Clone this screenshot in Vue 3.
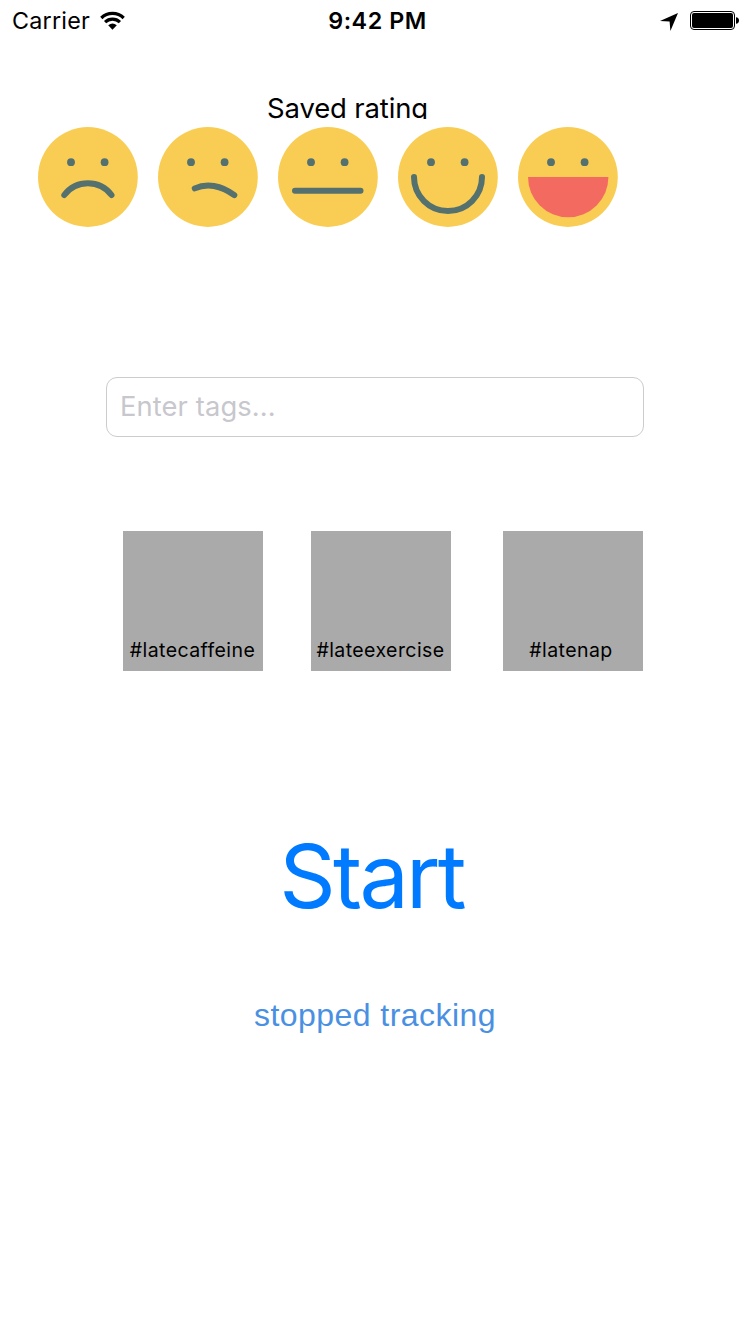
<script setup>
const faces = [
  { name: 'awful', mouth: 'M26.300 68A29.600 29.600 0 0 1 73.500 68' },
  { name: 'bad', mouth: 'M36.800 61.400C48.500 56 63 58 76.300 68.200' },
  { name: 'okay', mouth: 'M17 63.700H82.500' },
  { name: 'good', mouth: 'M16 50A34 34 0 0 0 84 50' },
  { name: 'great', mouth: null },
]
const tags = ['#latecaffeine', '#lateexercise', '#latenap']
</script>

<template>
  <main class="screen">
    <header class="status">
      <div class="side">
        <span class="carrier">Carrier</span>
        <svg class="wifi" width="25" height="19" viewBox="0 0 25 19">
          <g fill="none" stroke="#000" stroke-width="3.200">
            <path d="M1.300 7A16 16 0 0 1 23.700 7" />
            <path d="M5.100 11.200A10.600 10.600 0 0 1 19.900 11.200" />
          </g>
          <path d="M12.500 18.700L8.200 14.300Q12.500 10.800 16.800 14.300Z" />
        </svg>
      </div>
      <span class="clock">9:42 PM</span>
      <div class="side right">
        <svg class="arrow" width="18" height="18" viewBox="0 0 18 18">
          <path d="M18 0L10.400 18L9.600 8.600L0 7.900Z" />
        </svg>
        <svg class="battery" width="50" height="19" viewBox="0 0 50 19">
          <rect x=".5" y=".5" width="44" height="18" rx="3.500" fill="#fff" stroke="#000" />
          <rect x="2" y="2" width="41" height="15" rx="2" />
          <path d="M46 6.300Q49 6.500 49 9.500T46 12.700Z" />
        </svg>
      </div>
    </header>

    <div class="saved"><span>Saved rating</span></div>

    <div class="faces">
      <svg v-for="f in faces" :key="f.name" width="100" height="100" viewBox="0 0 100 100">
        <circle cx="49.900" cy="50" r="49.900" fill="#f9cd54" />
        <circle cx="33" cy="35.200" r="3.900" fill="#54706f" />
        <circle cx="66.600" cy="35.200" r="3.900" fill="#54706f" />
        <path v-if="f.mouth" :d="f.mouth" fill="none" stroke="#54706f" stroke-width="6" stroke-linecap="round" />
        <path v-else d="M10 50H90.400A40.200 40.200 0 0 1 10 50Z" fill="#f36b60" />
      </svg>
    </div>

    <input class="entry" type="text" placeholder="Enter tags..." />

    <div class="tags">
      <div v-for="t in tags" :key="t" class="tag"><span>{{ t }}</span></div>
    </div>

    <button class="start" type="button">Start</button>
    <p class="message">stopped tracking</p>
  </main>
</template>

<style>
body { background: #fff; }
</style>

<style scoped>
.screen {
  box-sizing: border-box;
  width: 750px;
  height: 1334px;
  overflow: hidden;
  display: flex;
  flex-direction: column;
  background: #fff;
  color: #000;
  font-family: Inter, "Liberation Sans", sans-serif;
}
svg { display: block; flex: none; }
.status {
  display: grid;
  grid-template-columns: 1fr auto 1fr;
  height: 40px;
  align-items: center;
  padding: 0 10px 0 12px;
  font-size: 23.300px;
  line-height: 40px;
}
.side { display: flex; align-items: center; }
.carrier { width: 88px; letter-spacing: 0.250px; white-space: nowrap; padding-top: 1px; }
.wifi { margin-top: -1px; }
.clock { font-weight: 560; letter-spacing: 0.550px; padding: 1px 0 0 3px; }
.right { justify-content: flex-end; gap: 12px; }
.arrow { position: relative; top: 1px; }
.saved {
  height: 24px;
  margin: 55px 0 0 267px;
  width: 162px;
  overflow: hidden;
  font-size: 27.500px;
  letter-spacing: -0.150px;
  line-height: 26px;
  white-space: nowrap;
}
.faces { display: flex; gap: 20.100px; margin: 8px 0 0 38px; }
.entry {
  box-sizing: border-box;
  width: 538px;
  height: 60px;
  margin: 150px 0 0 106px;
  padding: 0 13px 2px;
  border: 1px solid #ccc;
  border-radius: 11px;
  background: #fff;
  font: 27.300px Inter, "Liberation Sans", sans-serif;
  letter-spacing: 0.120px;
}
.entry::placeholder { color: #c7c7cd; opacity: 1; }
.tags {
  display: grid;
  grid-template-columns: 140px 140px 140px;
  column-gap: 48px;
  margin: 94px 0 0 123px;
}
.tag {
  height: 140px;
  display: flex;
  align-items: flex-end;
  justify-content: center;
  background: #aaa;
  font-size: 19.500px;
  line-height: 24px;
  letter-spacing: 0.430px;
}
.tag:last-child { margin-left: 4px; margin-right: -4px; }
.tag span { margin: 0 1px 9px 0; }
.tag:last-child span { margin-right: 4px; }
.start {
  margin: 149px 0 0;
  padding: 0 7px 0 0;
  border: 0;
  background: none;
  color: #007aff;
  font: 88px/112px Inter, "Liberation Sans", sans-serif;
  letter-spacing: -2.800px;
  height: 112px;
}
.message {
  margin: 63px 0 0;
  text-align: center;
  color: #4a90e2;
  font: 32px/40px "Liberation Sans", Arial, sans-serif;
  letter-spacing: 0.450px;
}
</style>
